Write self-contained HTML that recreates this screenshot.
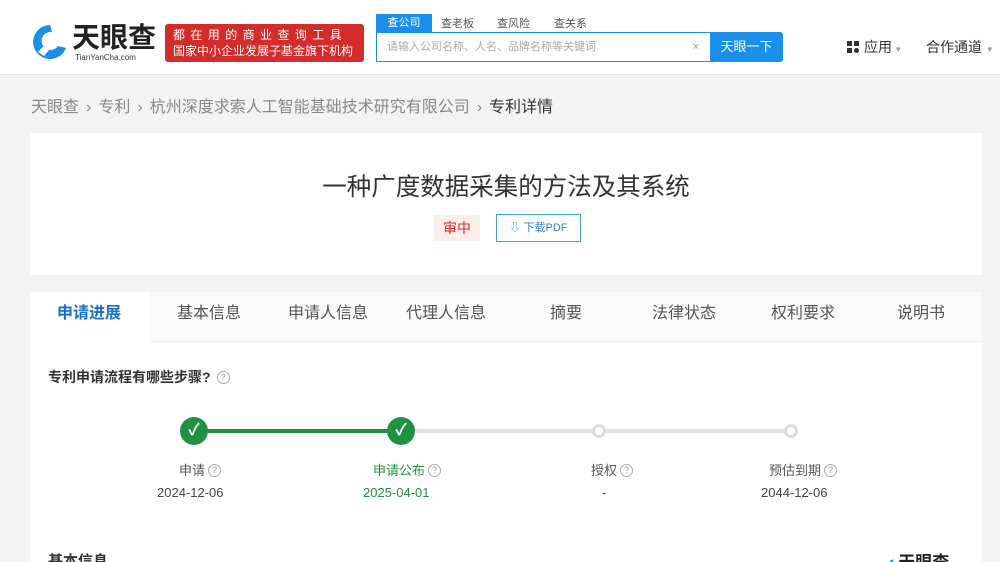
<!DOCTYPE html>
<html><head><meta charset="utf-8"><style>
*{margin:0;padding:0;box-sizing:border-box}
html,body{width:1000px;height:562px;overflow:hidden}
body{background:#f3f3f3;font-family:"Liberation Sans","Noto Sans CJK SC",sans-serif;color:#333;position:relative}
.a{position:absolute;white-space:nowrap}
.hdr{position:absolute;left:0;top:0;width:1000px;height:75px;background:#fff;border-bottom:1px solid #e8e8e8}
.card{position:absolute;background:#fff}
.q{display:inline-block;width:13px;height:13px;border:1px solid #aaa;border-radius:50%;font-size:9px;line-height:11px;text-align:center;color:#999;vertical-align:2px;margin-left:3px}
.s{margin:0 7px}
</style></head><body>
<div class="hdr">
  <svg class="a" style="left:30px;top:22px" width="40" height="40" viewBox="0 0 40 40"><path d="M20 3 A17 17 0 1 0 36 26 L28 24 A9 9 0 1 1 22 10 Z" fill="#1a8ee8"/><path d="M8 30 Q18 18 34 12 Q24 22 14 34Z" fill="#fff"/></svg>
  <div class="a" style="left:72px;top:24px;font-size:28px;line-height:1;font-weight:bold;color:#222">天眼查</div>
  <div class="a" style="left:75px;top:54px;font-size:8px;line-height:1;color:#333">TianYanCha.com</div>
  <div class="a" style="left:165px;top:24px;width:199px;height:38px;background:#d42b2b;border-radius:3px;color:#fff;font-size:12px;line-height:16px;padding:3px 0 0 8px">
    <div style="letter-spacing:5.4px">都在用的商业查询工具</div><div>国家中小企业发展子基金旗下机构</div></div>
  <div class="a" style="left:376px;top:14px;width:56px;height:18px;background:#1a8ee8;color:#fff;font-size:11px;text-align:center;line-height:18px">查公司</div>
  <div class="a" style="left:441px;top:15px;font-size:11px;color:#555">查老板</div>
  <div class="a" style="left:497px;top:15px;font-size:11px;color:#555">查风险</div>
  <div class="a" style="left:554px;top:15px;font-size:11px;color:#555">查关系</div>
  <div class="a" style="left:376px;top:32px;width:335px;height:30px;border:1px solid #1a8ee8;border-right:none;font-size:11px;color:#aaa;line-height:28px;padding-left:10px">请输入公司名称、人名、品牌名称等关键词<span style="position:absolute;right:12px;color:#999">×</span></div>
  <div class="a" style="left:710px;top:32px;width:73px;height:30px;background:#1a8ee8;color:#fff;font-size:13px;text-align:center;line-height:30px;border-radius:0 3px 3px 0">天眼一下</div>
  <div class="a" style="left:847px;top:41px;width:12px;height:12px;display:grid;grid-template-columns:5px 5px;gap:2px"><i style="background:#333"></i><i style="background:#333"></i><i style="background:#333"></i><i style="background:#333;border-radius:50%"></i></div>
  <div class="a" style="left:864px;top:37px;font-size:14px;color:#333">应用<span style="font-size:8px;color:#999"> ▼</span></div>
  <div class="a" style="left:926px;top:37px;font-size:14px;color:#333">合作通道 <span style="font-size:8px;color:#999">▼</span></div>
</div>
<div class="a" style="left:31px;top:93px;font-size:16px;color:#888">天眼查<span class="s">›</span>专利<span class="s">›</span>杭州深度求索人工智能基础技术研究有限公司<span class="s">›</span><span style="color:#333">专利详情</span></div>
<div class="card" style="left:30px;top:133px;width:952px;height:142px">
  <div class="a" style="left:0;width:952px;text-align:center;top:35px;font-size:24.5px;color:#333">一种广度数据采集的方法及其系统</div>
  <div class="a" style="left:404px;top:82px;width:46px;height:26px;background:#fdeeee;color:#d42b2b;font-size:14px;text-align:center;line-height:26px">审中</div>
  <div class="a" style="left:466px;top:81px;width:85px;height:28px;border:1px solid #4a9fd6;color:#3a7fc1;font-size:11px;text-align:center;line-height:26px">⇩ 下载PDF</div>
</div>
<div class="card" style="left:30px;top:292px;width:952px;height:270px">
  <div class="a" style="left:0;top:0;width:952px;height:50px;background:#fafafa;border-bottom:1px solid #eee"></div>
  <div class="a" style="left:0;top:0;width:120px;height:51px;background:#fff"></div>
  <div class="a" style="top:9px;left:0;font-size:16px;color:#555;line-height:26px">
    <span class="a" style="left:27px;color:#1a6fc7;font-weight:bold">申请进展</span>
    <span class="a" style="left:147px">基本信息</span>
    <span class="a" style="left:258px">申请人信息</span>
    <span class="a" style="left:376px">代理人信息</span>
    <span class="a" style="left:520px">摘要</span>
    <span class="a" style="left:622px">法律状态</span>
    <span class="a" style="left:741px">权利要求</span>
    <span class="a" style="left:867px">说明书</span>
  </div>
  <div class="a" style="left:18px;top:75px;font-size:14px;font-weight:bold;color:#333">专利申请流程有哪些步骤?<span class="q" style="font-weight:normal;margin-left:6px">?</span></div>
  <div class="a" style="left:165px;top:137px;width:206px;height:4px;background:#1f9140"></div>
  <div class="a" style="left:371px;top:137px;width:392px;height:4px;background:#e2e2e2"></div>
  <div class="a" style="left:150px;top:125px;width:28px;height:28px;border-radius:50%;background:#1f9140;color:#fff;font-size:16px;text-align:center;line-height:28px;font-weight:bold">✓</div>
  <div class="a" style="left:357px;top:125px;width:28px;height:28px;border-radius:50%;background:#1f9140;color:#fff;font-size:16px;text-align:center;line-height:28px;font-weight:bold">✓</div>
  <div class="a" style="left:562px;top:132px;width:14px;height:14px;border-radius:50%;background:#fff;border:3px solid #ddd"></div>
  <div class="a" style="left:754px;top:132px;width:14px;height:14px;border-radius:50%;background:#fff;border:3px solid #ddd"></div>
  <div class="a" style="left:149px;top:168px;font-size:13px;color:#555">申请<span class="q">?</span></div>
  <div class="a" style="left:127px;top:193px;font-size:13px;color:#444">2024-12-06</div>
  <div class="a" style="left:343px;top:168px;font-size:13px;color:#1f9140">申请公布<span class="q">?</span></div>
  <div class="a" style="left:333px;top:193px;font-size:13px;color:#1f9140">2025-04-01</div>
  <div class="a" style="left:561px;top:168px;font-size:13px;color:#555">授权<span class="q">?</span></div>
  <div class="a" style="left:572px;top:193px;font-size:13px;color:#444">-</div>
  <div class="a" style="left:739px;top:168px;font-size:13px;color:#555">预估到期<span class="q">?</span></div>
  <div class="a" style="left:731px;top:193px;font-size:13px;color:#444">2044-12-06</div>
  <div class="a" style="left:18px;top:258px;font-size:15px;font-weight:bold;color:#333">基本信息</div>
  <div class="a" style="left:858px;top:256px;font-size:17px;font-weight:bold;color:#222"><span style="color:#1a8ee8">◐</span>天眼查</div>
</div>
</body></html>
